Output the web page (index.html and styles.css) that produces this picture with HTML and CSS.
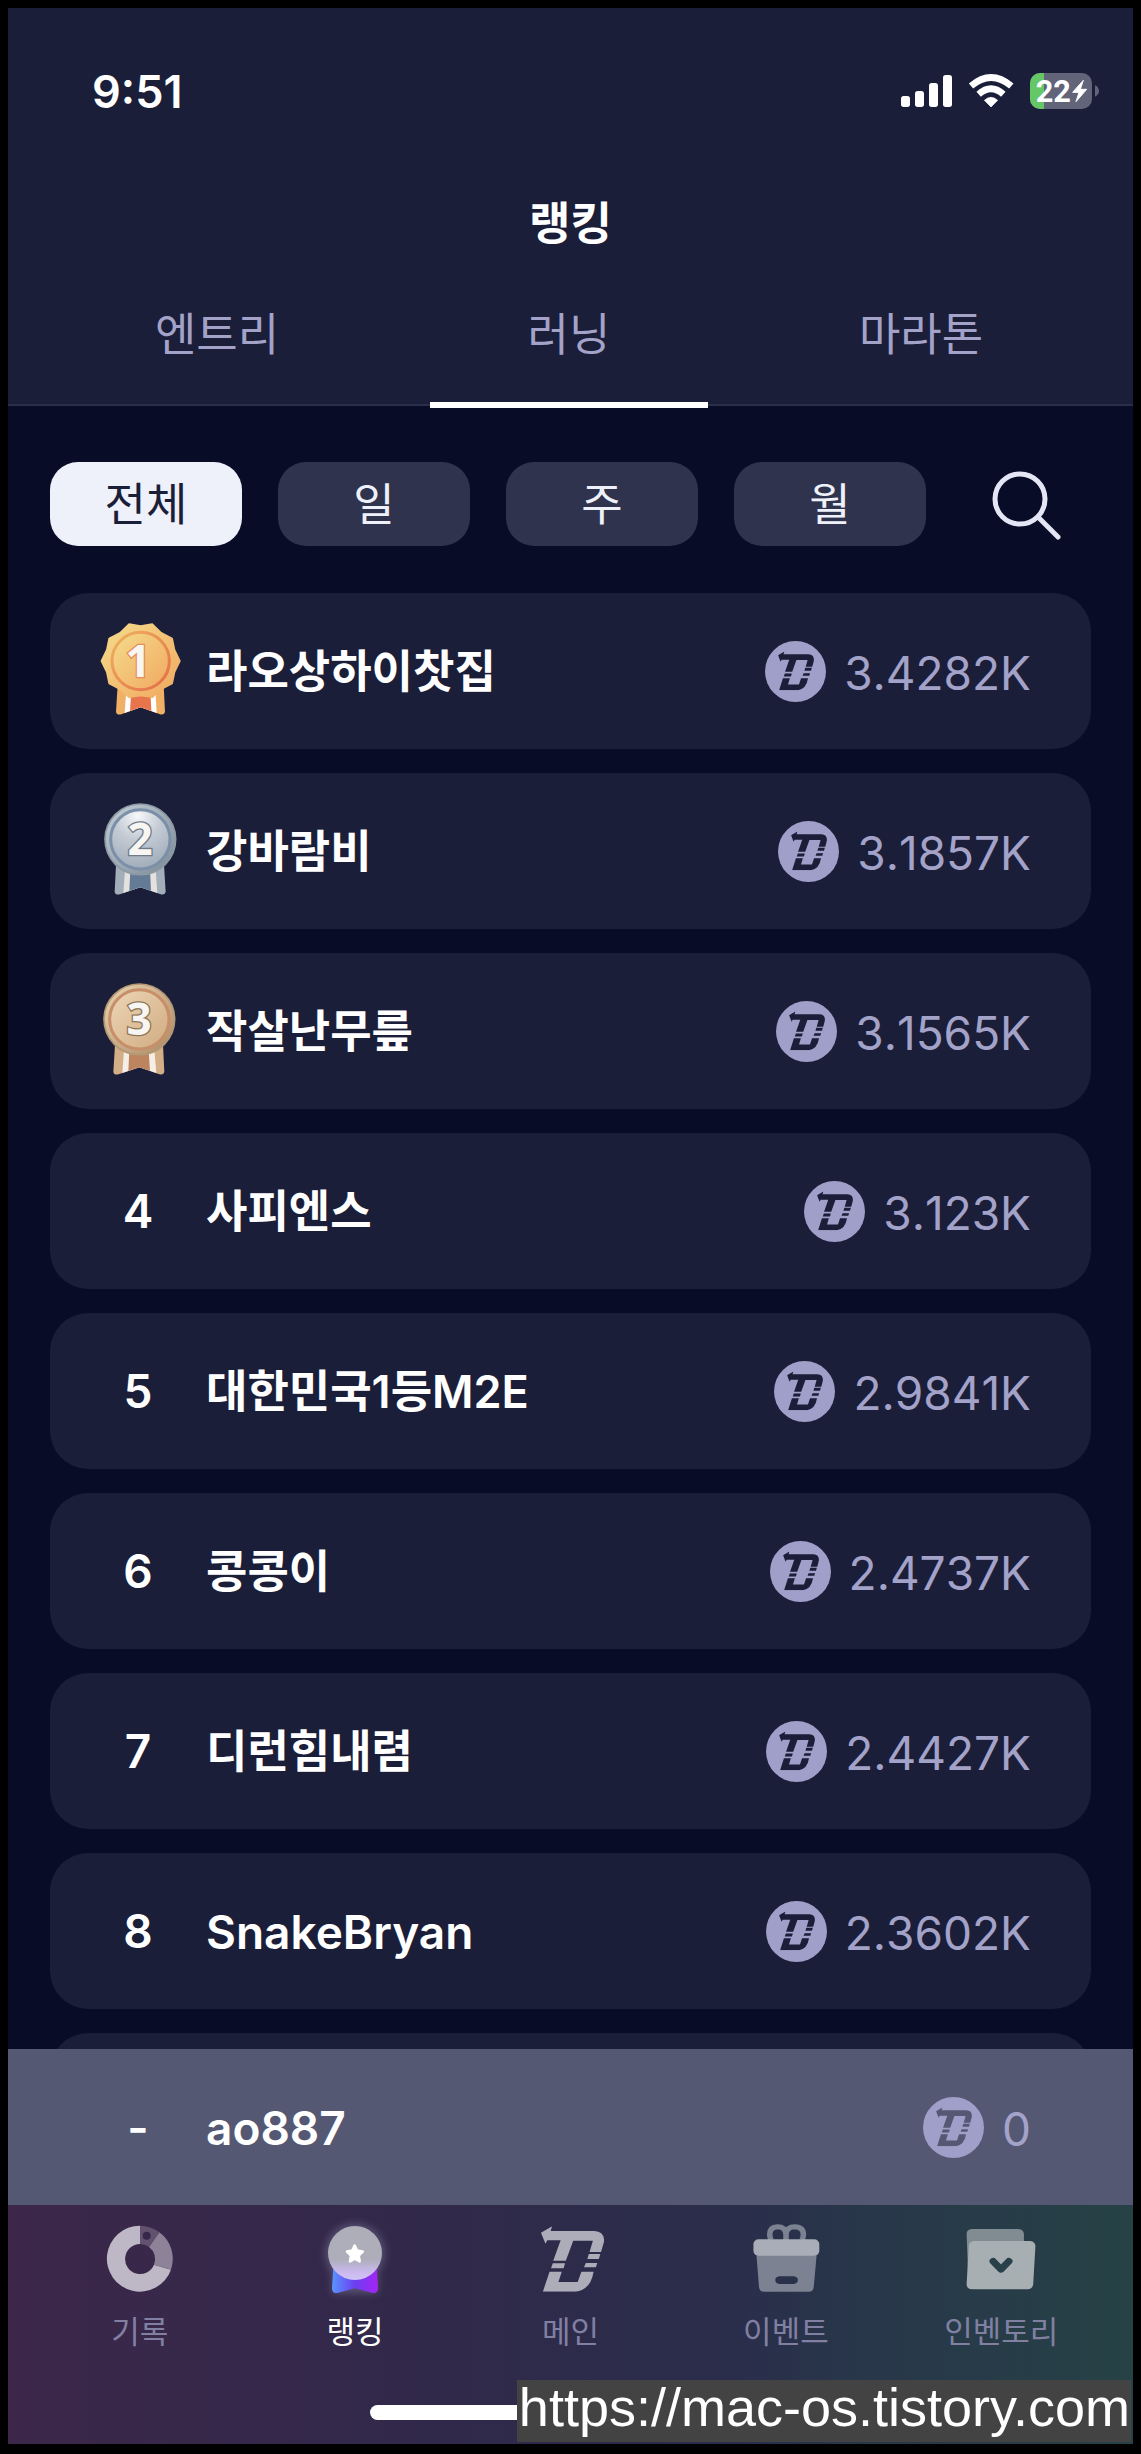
FILE: index.html
```html
<!DOCTYPE html>
<html lang="ko">
<head>
<meta charset="utf-8">
<meta name="viewport" content="width=device-width, initial-scale=1">
<title>랭킹</title>
<link rel="stylesheet" href="styles.css">
</head>
<body>
<svg class="defs" aria-hidden="true">
  <defs>
    <symbol id="logo" viewBox="114 76 170 196" preserveAspectRatio="none">
      <path d="M114 95 144 76 140 90H258Q286 92 284 122L276 153H245L254 119H201L181 179H147L167 118H131L126 128Z"/>
      <path d="M243 159H274L270 174H239ZM235 186H266L262 199H230ZM146 187H179L175 202H141ZM137 212H170L161 243H213L223 212H256Q248 266 208 272H119Z"/>
    </symbol>
    <symbol id="coin" viewBox="0 0 182 182">
      <circle cx="91" cy="91" r="91" fill="#9f9fc9"/>
      <use href="#logo" x="39" y="31" width="107" height="116"/>
    </symbol>
    <linearGradient id="gold" x1="0" y1="0" x2="1" y2="1"><stop offset="0" stop-color="#f5dc8c"/><stop offset="1" stop-color="#f0a860"/></linearGradient>
    <linearGradient id="goldRing" x1="0" y1="0" x2="1" y2="1"><stop offset="0" stop-color="#efb45e"/><stop offset="1" stop-color="#e36c48"/></linearGradient>
    <linearGradient id="silver" x1="0" y1="0" x2="1" y2="1"><stop offset="0" stop-color="#c3d0d8"/><stop offset="1" stop-color="#7b8996"/></linearGradient>
    <radialGradient id="silverFace" cx=".45" cy=".1" r="1"><stop offset="0" stop-color="#f6f8fa"/><stop offset=".4" stop-color="#c4cbd4"/><stop offset="1" stop-color="#9aa7b6"/></radialGradient>
    <linearGradient id="bronze" x1="0" y1="0" x2="1" y2="1"><stop offset="0" stop-color="#ead3b2"/><stop offset="1" stop-color="#ab8a64"/></linearGradient>
    <linearGradient id="bronzeFace" x1="0" y1="0" x2="1" y2="1"><stop offset="0" stop-color="#edd6b8"/><stop offset="1" stop-color="#d0ab80"/></linearGradient>
    <linearGradient id="ribbon"><stop offset="0" stop-color="#5a94ff"/><stop offset=".5" stop-color="#6b3ff0"/><stop offset="1" stop-color="#a524f6"/></linearGradient>
    <linearGradient id="badge" x1="0" y1="0" x2="0" y2="1"><stop offset="0" stop-color="#adaeb8"/><stop offset=".62" stop-color="#adaeba"/><stop offset=".85" stop-color="#cbb9ee"/><stop offset="1" stop-color="#cfc4f6"/></linearGradient>
    <filter id="glow" x="-40%" y="-40%" width="180%" height="180%"><feGaussianBlur stdDeviation="12"/></filter>
  </defs>
</svg>

<div class="app">
  <header class="header">
    <div class="status">
      <span class="time">9:51</span>
      <svg class="status-icons" viewBox="120 60 600 120" role="img" aria-label="신호, Wi-Fi, 배터리 22%">
        <g fill="#fff">
          <rect x="123" y="135" width="27" height="33" rx="8"/>
          <rect x="165" y="120" width="27" height="48" rx="8"/>
          <rect x="207" y="96" width="27" height="72" rx="8"/>
          <rect x="249" y="72" width="27" height="96" rx="8"/>
          <path d="M393 168 373 148Q393 130 413 148Z" stroke="#fff" stroke-width="2" stroke-linejoin="round"/>
        </g>
        <g fill="none" stroke="#fff" stroke-width="20">
          <path d="M333 105Q393 54 454 105"/>
          <path d="M356 130Q393 97 430 130"/>
        </g>
        <clipPath id="cell"><rect x="510" y="66" width="186" height="108" rx="30"/></clipPath>
        <g clip-path="url(#cell)"><path fill="#62647a" d="M510 66h186v108H510z"/><path fill="#66c766" d="M510 66h42v108h-42z"/></g>
        <path fill="#62647a" d="M705 103q12 6 12 17t-12 17z"/>
        <text class="charge" x="527" y="153">22</text>
        <path fill="#fff" stroke="#fff" stroke-width="3" stroke-linejoin="round" d="M670 88 638 124H657L648 152 680 115H661Z"/>
      </svg>
    </div>
    <h1 class="title">랭킹</h1>
    <nav class="tabs">
      <a class="tab" href="#entry">엔트리</a>
      <a class="tab tab-current" href="#running" aria-current="page">러닝</a>
      <a class="tab" href="#marathon">마라톤</a>
    </nav>
  </header>

  <div class="filters">
    <button class="chip chip-on" type="button">전체</button>
    <button class="chip" type="button">일</button>
    <button class="chip" type="button">주</button>
    <button class="chip" type="button">월</button>
    <button class="search" type="button" aria-label="검색">
      <svg viewBox="0 0 72 72"><circle cx="29" cy="31" r="25"/><path d="M48 50 67 69"/></svg>
    </button>
  </div>

  <ol class="ranks">
    <li class="row">
      <span class="rank"><svg class="medal" viewBox="42 69 264 288">
        <path d="M113 255H251L255 336Q252 346 240 343L182 322 124 343Q110 346 108 336Z" fill="#f0b066"/>
        <path d="M139 270H226L230 339 182 322 134 339Z" fill="#fff"/>
        <path d="M154 270H211L214 333 182 322 150 333Z" fill="#e8744c"/>
        <path d="M299 183 283 216 276 250 243 267 217 291 182 286 147 291 121 267 88 250 81 216 65 183 81 150 88 116 121 99 147 73 182 79 217 73 243 99 276 116 283 150Z" fill="url(#gold)" stroke="url(#gold)" stroke-width="6" stroke-linejoin="round"/>
        <circle cx="182" cy="183" r="86" fill="url(#gold)" stroke="url(#goldRing)" stroke-width="9"/>
        <text class="digit digit-gold" x="174" y="231">1</text>
      </svg></span>
      <span class="name">라오상하이찻집</span>
      <svg class="coin"><use href="#coin"/></svg><span class="value">3.4282K</span>
    </li>
    <li class="row">
      <span class="rank"><svg class="medal" viewBox="42 69 264 288">
        <path d="M108 255H252L257 336Q254 346 242 343L181 322 120 343Q106 346 104 336Z" fill="#a2afbb"/>
        <path d="M135 270H227L232 339 181 322 130 339Z" fill="#e4e1de"/>
        <path d="M151 270H210L213 333 181 322 148 333Z" fill="#647b96"/>
        <circle cx="181" cy="178" r="106" fill="url(#silver)" stroke="#8d9aa5" stroke-width="5"/>
        <circle cx="181" cy="178" r="89" fill="url(#silverFace)" stroke="#7b8fa9" stroke-width="9"/>
        <text class="digit digit-silver" x="180" y="226">2</text>
      </svg></span>
      <span class="name">강바람비</span>
      <svg class="coin"><use href="#coin"/></svg><span class="value">3.1857K</span>
    </li>
    <li class="row">
      <span class="rank"><svg class="medal" viewBox="42 69 264 288">
        <path d="M105 255H249L253 336Q250 346 238 343L178 322 116 343Q102 346 100 336Z" fill="#d3ae86"/>
        <path d="M132 270H223L229 339 178 322 127 339Z" fill="#f6efe8"/>
        <path d="M148 270H206L210 333 178 322 145 333Z" fill="#bd8460"/>
        <circle cx="178" cy="178" r="106" fill="url(#bronze)" stroke="#b49873" stroke-width="5"/>
        <circle cx="178" cy="178" r="89" fill="url(#bronzeFace)" stroke="#c88e68" stroke-width="9"/>
        <text class="digit digit-bronze" x="177" y="226">3</text>
      </svg></span>
      <span class="name">작살난무릎</span>
      <svg class="coin"><use href="#coin"/></svg><span class="value">3.1565K</span>
    </li>
    <li class="row"><span class="rank">4</span><span class="name">사피엔스</span><svg class="coin"><use href="#coin"/></svg><span class="value">3.123K</span></li>
    <li class="row"><span class="rank">5</span><span class="name">대한민국1등M2E</span><svg class="coin"><use href="#coin"/></svg><span class="value">2.9841K</span></li>
    <li class="row"><span class="rank">6</span><span class="name">콩콩이</span><svg class="coin"><use href="#coin"/></svg><span class="value">2.4737K</span></li>
    <li class="row"><span class="rank">7</span><span class="name">디런힘내렴</span><svg class="coin"><use href="#coin"/></svg><span class="value">2.4427K</span></li>
    <li class="row"><span class="rank">8</span><span class="name name-latin">SnakeBryan</span><svg class="coin"><use href="#coin"/></svg><span class="value">2.3602K</span></li>
    <li class="row"></li>
  </ol>

  <div class="me">
    <div class="row row-me"><span class="rank">-</span><span class="name name-latin">ao887</span><svg class="coin"><use href="#coin"/></svg><span class="value">0</span></div>
  </div>

  <footer class="footer">
    <nav class="menu">
      <a class="item" href="#record">
        <svg class="icon" viewBox="126 60 228 228">
          <path fill="#beb7c5" d="M240 74V129A45 45 0 1 0 282 191L333 206A99 99 0 1 1 240 74Z"/>
          <path fill="#8e8299" d="M298 94A99 99 0 0 1 333 206L282 191A45 45 0 0 0 267 138Z"/>
          <path fill="#63526f" d="M240 74A99 99 0 0 1 298 94L267 138A45 45 0 0 0 240 129Z"/>
          <circle cx="260" cy="104" r="12" fill="#38274b"/>
        </svg>기록</a>
      <a class="item item-current" href="#ranking" aria-current="page">
        <svg class="icon" viewBox="774 60 228 228">
          <g fill="#a9a4c8" opacity=".35" filter="url(#glow)"><circle cx="888" cy="156" r="88"/><path d="M820 200H956V276H820Z"/></g>
          <path fill="url(#ribbon)" d="M823 195H953L957 262Q956 280 938 275L888 262 838 275Q819 280 819 262Z"/>
          <circle cx="888" cy="156" r="81" fill="url(#badge)"/>
          <path fill="#fff" stroke="#fff" stroke-width="8" stroke-linejoin="round" d="M887 134 894 149 911 152 899 164 902 181 887 173 873 181 876 164 864 152 880 149Z"/>
        </svg>랭킹</a>
      <a class="item" href="#main">
        <svg class="icon" viewBox="0 60 228 228"><use href="#logo" x="27" y="76" width="189" height="196" fill="#adadb9"/></svg>메인</a>
      <a class="item" href="#event">
        <svg class="icon" viewBox="0 60 228 228"><g transform="translate(114 0) scale(1.11 1) translate(-777 0)">
          <path fill="none" stroke="#7c8292" stroke-width="15" d="M777 117V99Q775 77 754 77 733 78 733 100 733 110 737 117M777 99Q779 77 801 77 824 78 824 100 824 110 820 117"/>
          <path fill="#7c8292" fill-rule="evenodd" d="M697 160H860L852 257Q851 272 838 272H718Q705 272 704 257ZM759 226Q748 228 748 237 748 247 759 249H798Q809 247 809 237 809 228 798 226Z"/>
          <rect x="689" y="115" width="178" height="49" rx="14" fill="#a9adb8"/>
        </g></svg>이벤트</a>
      <a class="item" href="#inventory">
        <svg class="icon" viewBox="0 60 228 228"><g transform="translate(114 0) scale(1.11 1) translate(-1358 0)">
          <path fill="#808b92" d="M1265 99Q1265 85 1279 84H1405Q1419 85 1420 99V130H1285L1270 240Z"/>
          <path fill="#a7afb3" d="M1271 135Q1271 121 1286 120H1437Q1451 122 1451 136L1445 250Q1444 264 1430 265H1279Q1265 264 1265 250Z"/>
          <path fill="none" stroke="#28404a" stroke-width="20" stroke-linecap="round" stroke-linejoin="round" d="M1337 181 1358 205 1379 181"/>
        </g></svg>인벤토리</a>
    </nav>
    <div class="home-bar"></div>
  </footer>
  <p class="watermark">https://mac-os.tistory.com</p>
</div>
</body>
</html>
```
FILE: styles.css
```css
* { box-sizing: border-box; }

body {
  margin: 0;
  padding: 8px 8px 10px;
  height: 100vh;
  background: #000;
  color: #fff;
  font-family: Inter, "Noto Sans CJK KR", sans-serif;
  font-size: 46px;
  line-height: 64px;
}

a { color: inherit; text-decoration: none; }
button { border: 0; font: inherit; cursor: pointer; }
.defs { position: absolute; width: 0; height: 0; }

.app {
  position: relative;
  display: flex;
  flex-direction: column;
  height: 100%;
  overflow: hidden;
  background: #080c26;
}

/* Header */
.header {
  flex: none;
  background: #1b1e38;
  border-bottom: 2px solid #2b2e48;
}
.status {
  display: flex;
  align-items: center;
  justify-content: space-between;
  padding: 50px 33px 0 84px;
}
.time { padding-top: 2px; font-size: 45px; font-weight: 600; }
.status-icons { width: 200px; height: 40px; }
.charge { fill: #fff; font-family: Roboto, sans-serif; font-size: 92px; font-weight: 700; }
.title {
  margin: 68px 0 0;
  font-size: 45px;
  font-weight: 600;
  text-align: center;
}
.tabs {
  display: grid;
  grid-template-columns: repeat(3, 1fr);
  padding: 0 36px 0 33px;
}
.tab {
  position: relative;
  padding: 47px 0 37px;
  color: #a3a2c8;
  font-size: 45px;
  text-align: center;
}
.tab-current::after {
  content: "";
  position: absolute;
  right: 37px;
  bottom: -4px;
  left: 37px;
  height: 6px;
  background: #fff;
}

/* Period filter */
.filters {
  flex: none;
  display: grid;
  grid-template-columns: repeat(4, 192fr) 129fr;
  gap: 36px;
  padding: 56px 42px 47px;
}
.chip {
  height: 84px;
  padding: 2px 0 0;
  border-radius: 28px;
  background: #30334e;
  color: #eef0fa;
  font-size: 45px;
}
.chip-on { background: #eef0fa; color: #1b1e38; }
.search {
  display: flex;
  align-items: center;
  justify-content: center;
  padding: 0;
  background: none;
}
.search svg {
  width: 72px;
  height: 72px;
  fill: none;
  stroke: #e4e6f6;
  stroke-width: 5;
  stroke-linecap: round;
}

/* Ranking list */
.ranks {
  flex: 1;
  min-height: 0;
  margin: 0;
  padding: 0 42px;
  overflow: hidden;
  list-style: none;
}
.row {
  display: flex;
  align-items: center;
  height: 156px;
  margin-bottom: 24px;
  padding: 0 60px 0 44px;
  border-radius: 38px;
  background: #1b1e38;
  fill: #1b1e38;
}
.rank {
  display: flex;
  justify-content: center;
  width: 88px;
  margin-right: 24px;
  font-weight: 600;
}
.medal { width: 88px; height: 96px; }
.digit {
  font-family: "Noto Sans", sans-serif;
  font-size: 132px;
  font-weight: 700;
  text-anchor: middle;
  fill: #f8f6f2;
  stroke-width: 8px;
  paint-order: stroke;
}
.digit-gold { stroke: #e58e58; }
.digit-silver { stroke: #6f7b88; }
.digit-bronze { stroke: #8c7558; }
.name {
  flex: 1;
  padding-top: 2px;
  font-size: 45px;
  font-weight: 600;
}
.name-latin { font-size: 46px; }
.coin { width: 61px; height: 61px; margin-right: 18px; }
.value { padding-top: 3px; color: #a3a2c8; font-kerning: none; }

.me { flex: none; padding: 0 42px; background: #555873; }
.row-me { margin: 0; background: none; fill: #555873; }

/* Bottom menu */
.footer {
  flex: none;
  padding: 16px 24px 24px;
  background: linear-gradient(90deg, #3c274a, #30294a 40%, #2a2e4b 65%, #28364a 75%, #264246);
}
.menu { display: grid; grid-template-columns: repeat(5, 1fr); }
.item {
  display: flex;
  flex-direction: column;
  align-items: center;
  gap: 15px;
  color: #8180a3;
  font-size: 31px;
  line-height: 40px;
}
.item-current { color: #fff; }
.icon { width: 76px; height: 76px; overflow: visible; }
.home-bar {
  width: 402px;
  height: 15px;
  margin: 53px auto 0;
  border-radius: 8px;
  background: #fff;
}

.watermark {
  position: absolute;
  right: 2px;
  bottom: 2px;
  margin: 0;
  padding: 0 1px 8px 2px;
  background: #434343;
  font-family: "Liberation Sans", Arial, sans-serif;
  font-size: 54px;
  line-height: 54px;
}
```
